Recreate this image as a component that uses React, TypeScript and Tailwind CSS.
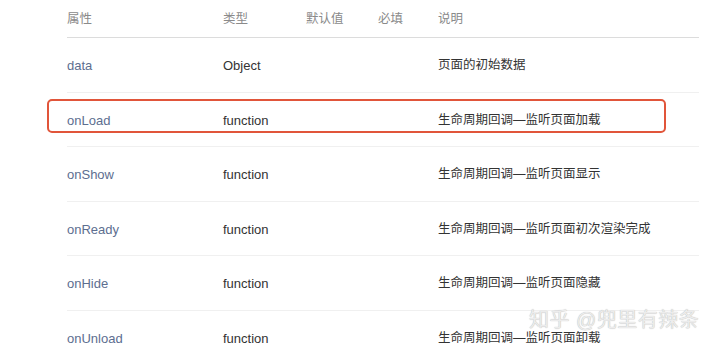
import React from 'react';

type Row = { name: string; type: string; desc: string };

const rows: Row[] = [
  { name: 'data', type: 'Object', desc: '页面的初始数据' },
  { name: 'onLoad', type: 'function', desc: '生命周期回调—监听页面加载' },
  { name: 'onShow', type: 'function', desc: '生命周期回调—监听页面显示' },
  { name: 'onReady', type: 'function', desc: '生命周期回调—监听页面初次渲染完成' },
  { name: 'onHide', type: 'function', desc: '生命周期回调—监听页面隐藏' },
  { name: 'onUnload', type: 'function', desc: '生命周期回调—监听页面卸载' },
];

const cols = 'grid grid-cols-[156px_83px_72px_60px_1fr] items-center pt-[2px]';

export default function App() {
  return (
    <div
      className="relative w-[720px] h-[352px] overflow-hidden bg-white text-[12.5px]"
      style={{ fontFamily: '"Liberation Sans", "Noto Sans CJK SC", sans-serif' }}
    >
      <div className="ml-[67px] w-[632px]">
        {/* header */}
        <div className={`${cols} h-[38px] border-b border-[#dcdcdc] text-[#8a8a8a]`}>
          <span>属性</span>
          <span>类型</span>
          <span>默认值</span>
          <span>必填</span>
          <span>说明</span>
        </div>

        {rows.map((r) => (
          <div key={r.name} className={`${cols} h-[54.5px] border-b border-[#f0f0f0]`}>
            <span className="text-[13px] text-[#5d6e90]">{r.name}</span>
            <span className="text-[13px] text-[#333]">{r.type}</span>
            <span />
            <span />
            <span className="text-[#333]">{r.desc}</span>
          </div>
        ))}
      </div>

      {/* annotation box */}
      <div className="absolute left-[47px] top-[99px] w-[619px] h-[34px] border-2 border-[#e1553a] rounded-[5px]" />

      {/* watermark */}
      <div
        className="absolute left-[529px] top-[310px] text-[20px] leading-none text-[#ececec] tracking-[0.5px]"
        style={{ textShadow: '0 0 1px #a8a8a8' }}
      >
        知乎 @兜里有辣条
      </div>
    </div>
  );
}
